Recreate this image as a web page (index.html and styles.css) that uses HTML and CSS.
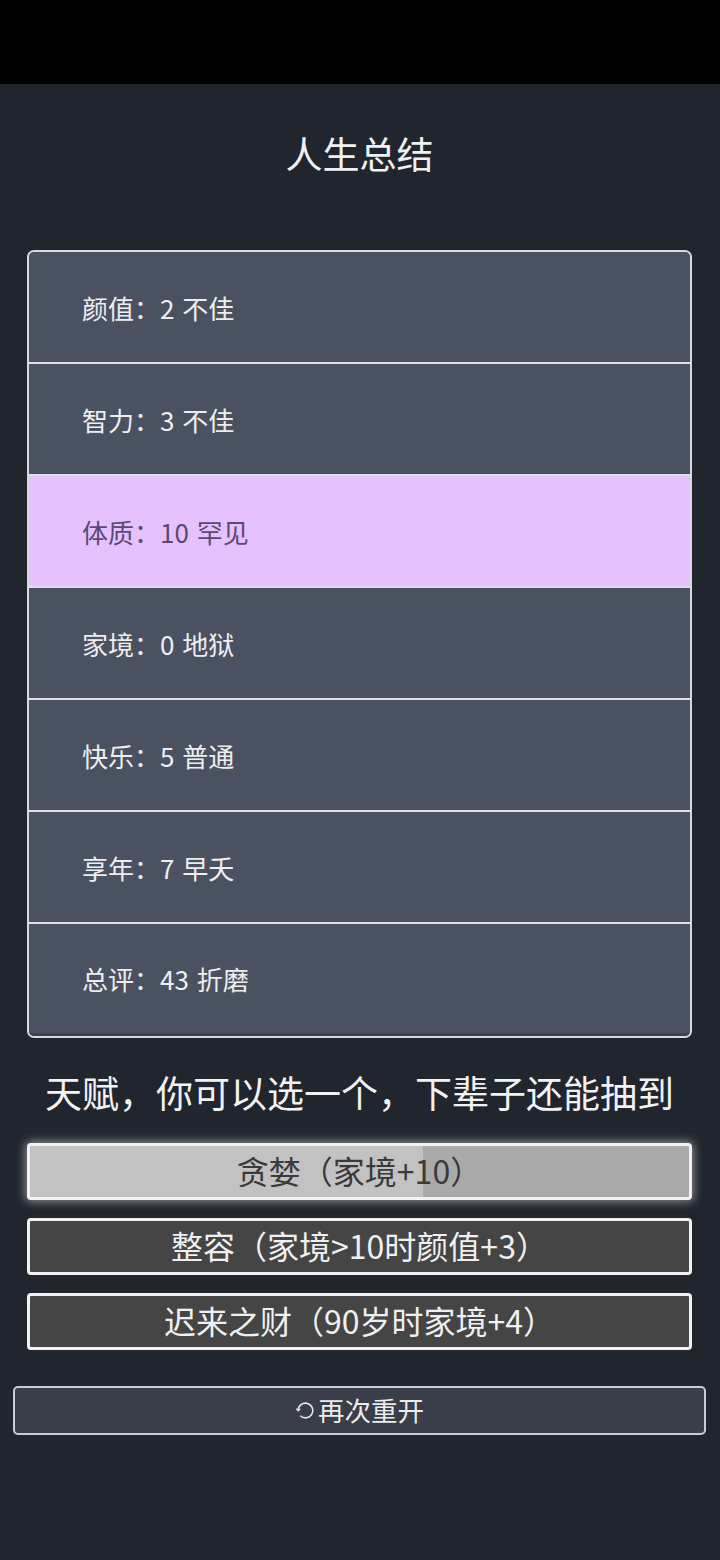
FILE: index.html
```html
<!DOCTYPE html>
<html lang="zh-CN">
<head>
<meta charset="utf-8">
<title>人生总结</title>
<link rel="stylesheet" href="styles.css">
</head>
<body>
<div class="statusbar"></div>
<main class="page">
  <h1 class="title">人生总结</h1>
  <ul class="summary">
    <li class="row">颜值：2 不佳</li>
    <li class="row">智力：3 不佳</li>
    <li class="row row-rare">体质：10 罕见</li>
    <li class="row">家境：0 地狱</li>
    <li class="row">快乐：5 普通</li>
    <li class="row">享年：7 早夭</li>
    <li class="row row-last">总评：43 折磨</li>
  </ul>
  <h2 class="talent-title">天赋，你可以选一个，下辈子还能抽到</h2>
  <div class="talents">
    <button class="talent talent-active"><span class="talent-fill" style="width:59.6%"></span><span class="talent-text">贪婪（家境+10）</span></button>
    <button class="talent"><span class="talent-text">整容（家境&gt;10时颜值+3）</span></button>
    <button class="talent"><span class="talent-text">迟来之财（90岁时家境+4）</span></button>
  </div>
  <button class="restart"><svg class="restart-icon" viewBox="0 0 20 20" width="21" height="21"><path d="M3 10 A7 7 0 1 1 5.05 14.95" fill="none" stroke="#e8e8e8" stroke-width="1.5"/><path d="M1.2 8.2 L3 10.4 L5 8.4" fill="none" stroke="#e8e8e8" stroke-width="1.2"/></svg><span>再次重开</span></button>
</main>
</body>
</html>
```
FILE: styles.css
```css
html, body {
  margin: 0;
  padding: 0;
  background: #21252e;
}
body {
  width: 720px;
  height: 1560px;
  overflow: hidden;
  font-family: "Noto Sans CJK SC", "Noto Sans", sans-serif;
  color: #ececec;
}
.statusbar {
  height: 84px;
  background: #000;
}
.page {
  padding: 44px 14px 0 13px;
}
.title {
  margin: 0;
  font-size: 37px;
  line-height: 50px;
  font-weight: 400;
  text-align: center;
  color: #f0f0f0;
}
.summary {
  list-style: none;
  margin: 72px 14px 0 14px;
  padding: 0;
  border: 2px solid #d6d9df;
  border-radius: 7px;
  overflow: hidden;
  background: #4a5261;
}
.row {
  height: 110px;
  border-bottom: 2px solid #dfe2e8;
  display: flex;
  align-items: center;
  padding-left: 53px;
  font-size: 26px;
  color: #eeeeee;
  background: #4a5261;
  word-spacing: 2px;
}
.row-rare {
  background: #e6c1fe;
  color: #5a4a72;
}
.row-last {
  border-bottom: 3px solid #3d4350;
  height: 109px;
}
.talent-title {
  margin: 28px 0 0 0;
  font-size: 37px;
  line-height: 52px;
  font-weight: 400;
  text-align: center;
  color: #f2f2f2;
}
.talents {
  margin: 25px 14px 0 14px;
  display: flex;
  flex-direction: column;
  gap: 18px;
}
.talent {
  position: relative;
  height: 57px;
  padding: 0;
  border: 3px solid #f2f2f2;
  border-radius: 4px;
  background: #454545;
  color: #f0f0f0;
  font-family: inherit;
  font-size: 32px;
  overflow: hidden;
  display: flex;
  align-items: center;
  justify-content: center;
}
.talent-active {
  background: #aaaaaa;
  color: #3a3a3a;
  box-shadow: 0 0 10px 2px rgba(255, 255, 255, 0.45);
  overflow: visible;
}
.talent-fill {
  position: absolute;
  left: 0;
  top: 0;
  bottom: 0;
  background: #c2c2c2;
}
.talent-text {
  position: relative;
  line-height: 1;
  margin-top: -3px;
}
.restart {
  margin-top: 36px;
  width: 693px;
  height: 49px;
  border: 2px solid #c9ccd2;
  border-radius: 5px;
  background: #3a3e48;
  color: #ececec;
  font-family: inherit;
  font-size: 26.5px;
  display: flex;
  align-items: center;
  justify-content: center;
  padding: 0 0 3px 0;
}
.restart-icon {
  margin-right: 2px;
  margin-top: 3px;
}
```
